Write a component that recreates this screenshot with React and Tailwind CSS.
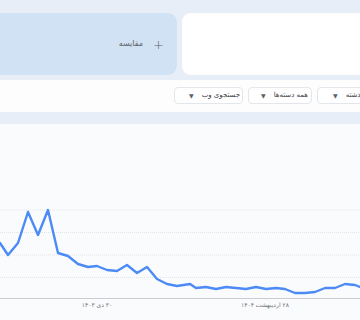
import React from "react";

const points = [
  [0, 243], [8, 255], [18, 243], [28, 212], [38, 235], [48, 210], [58, 253],
  [68, 256], [78, 264], [88, 267], [97, 266], [107, 270], [117, 271], [127, 265],
  [137, 273], [147, 267], [157, 279], [167, 284], [177, 286], [190, 284],
  [196, 288], [206, 287], [216, 289], [226, 287], [236, 288], [246, 289],
  [256, 287], [266, 289], [276, 288], [285, 289], [295, 293], [305, 293],
  [315, 292], [325, 288], [335, 288], [345, 284], [355, 285], [360, 287],
];

const Dropdown = ({ label, className }) => (
  <div
    className={`flex h-[17px] shrink-0 items-center gap-[8px] rounded-[4px] border border-[#e3e6ea] bg-white ${className}`}
  >
    <span className="text-[6px] leading-none text-[#5f6368]">▼</span>
    <span dir="rtl" className="whitespace-nowrap text-[7px] leading-none text-[#3c4043]">{label}</span>
  </div>
);

export default function App() {
  const d = points.map((p, i) => `${i ? "L" : "M"}${p[0]} ${p[1]}`).join(" ");

  return (
    <div className="h-[320px] w-[360px] overflow-hidden bg-[#fafbfd] font-['DejaVu_Sans',sans-serif]">
      {/* Compare cards */}
      <div className="flex h-[80px] gap-[5px] bg-[#e8eef7] pt-[13px]">
        <div className="ml-[-20px] flex h-[62px] w-[197px] shrink-0 items-center justify-end gap-[10px] rounded-[9px] bg-[#d2e2f5] pr-[13px]">
          <span dir="rtl" className="text-[8px] text-[#5f6368]">مقایسه</span>
          <span className="text-[13px] font-light leading-none text-[#5f6368]">+</span>
        </div>
        <div className="h-[62px] w-[200px] shrink-0 rounded-[9px] bg-white"></div>
      </div>

      {/* Filters */}
      <div className="mr-[-41px] flex h-[32px] items-center justify-end gap-[5px] bg-[#fdfdfe] pb-[1px]">
        <Dropdown label="جستجوی وب" className="w-[69px] pl-[14px]" />
        <Dropdown label="همه دسته‌ها" className="w-[64px] pl-[12px]" />
        <Dropdown label="۱۲ ماه گذشته" className="w-[84px] pl-[15px]" />
      </div>

      <div className="h-[12px] bg-[#e8eef7]"></div>

      {/* Chart */}
      <div className="bg-[#fafbfd]">
        <svg width="360" height="178" viewBox="0 124 360 178" className="block">
          {[210, 232.5, 255, 277.5].map((y) => (
            <line key={y} x1="0" x2="360" y1={y} y2={y} stroke="#e2e4e8" strokeWidth="1" strokeDasharray="1 1" />
          ))}
          <line x1="0" x2="360" y1="298.5" y2="298.5" stroke="#c9ccd1" strokeWidth="1" />
          <path d={d} fill="none" stroke="#4c8bf5" strokeWidth="2.4" strokeLinejoin="round" strokeLinecap="round" />
        </svg>
        <div className="flex gap-[108px] pl-[67px] text-[6px] leading-none text-[#70757a]">
          <span dir="rtl" className="w-[60px] text-center">۳۰ دی ۱۴۰۳</span>
          <span dir="rtl" className="w-[60px] text-center">۲۸ اردیبهشت ۱۴۰۴</span>
        </div>
      </div>
    </div>
  );
}
